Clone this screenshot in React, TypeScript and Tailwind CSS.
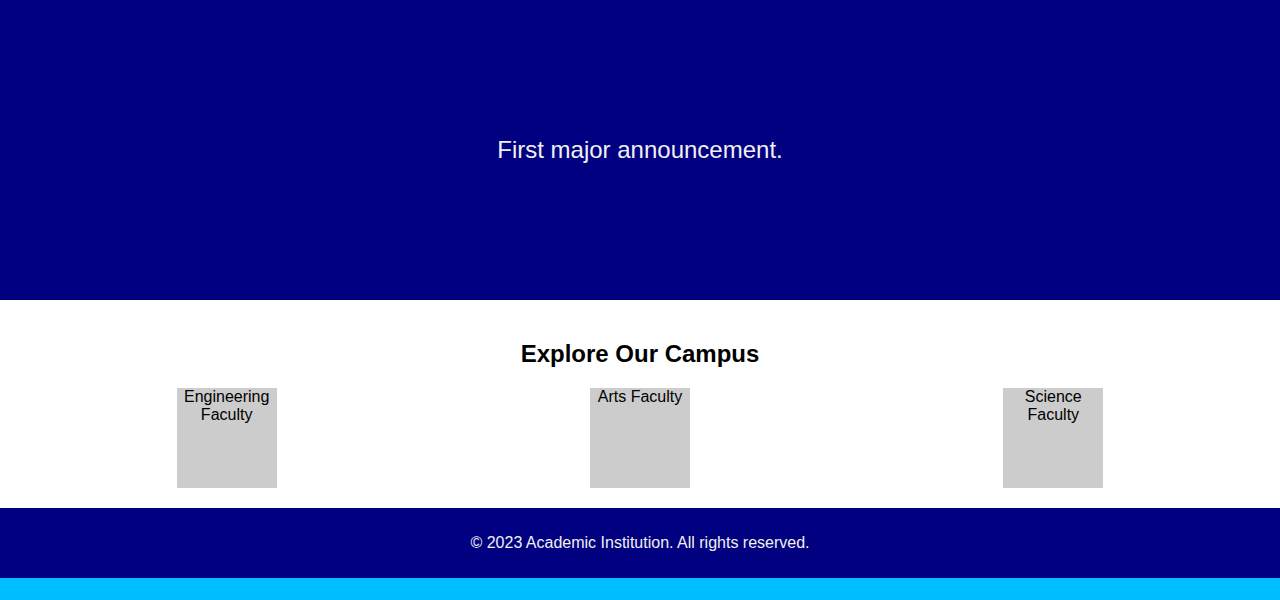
const faculties = ['Engineering Faculty', 'Arts Faculty', 'Science Faculty'];

export default function App() {
  return (
    <div className="min-h-screen bg-[#00bfff] font-['Liberation_Sans',Arial,sans-serif]">
      {/* Announcement banner */}
      <section className="h-[300px] bg-[#000080] flex items-center justify-center">
        <p className="text-2xl leading-[1.15] text-[#f0f0f0]">First major announcement.</p>
      </section>

      {/* Campus */}
      <section className="bg-white p-5">
        <h2 className="text-2xl font-bold leading-[1.15] text-black text-center my-5">Explore Our Campus</h2>
        <div className="flex justify-around">
          {faculties.map((name) => (
            <div key={name} className="w-[100px] h-[100px] bg-[#cccccc] text-center text-base leading-[1.15] text-black">
              {name}
            </div>
          ))}
        </div>
      </section>

      {/* Footer */}
      <footer className="bg-[#000080] h-[70px] pt-[2px] flex items-center justify-center">
        <p className="text-base leading-[1.15] text-[#f0f0f0]">© 2023 Academic Institution. All rights reserved.</p>
      </footer>
    </div>
  );
}
